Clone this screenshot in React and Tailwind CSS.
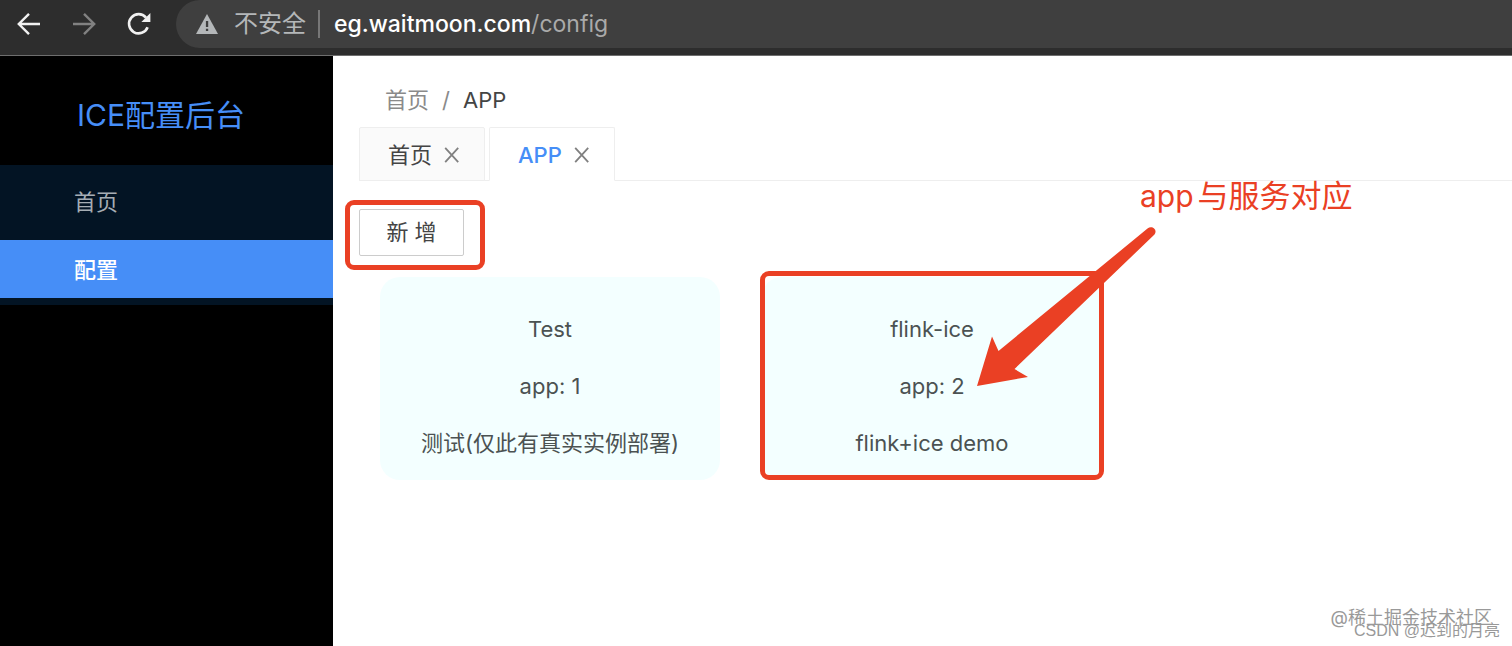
import { useState } from "react";

const apps = [
  { id: 1, name: "Test", info: "测试(仅此有真实实例部署)" },
  { id: 2, name: "flink-ice", info: "flink+ice demo", marked: true },
];

function BrowserBar() {
  return (
    <header className="flex h-14 shrink-0 items-start border-b border-[#6e6e6e] bg-[#2d2d2d]">
      <div className="flex h-12 w-44 shrink-0 items-center gap-[29px] pl-4">
        <button aria-label="Back" className="text-[#f1f1f1]">
          <svg width="26" height="24" viewBox="0 0 26 24" fill="none" stroke="currentColor" strokeWidth="2.4">
            <path d="M24 12H3M13 1.8 2.8 12 13 22.2" />
          </svg>
        </button>
        <button aria-label="Forward" className="text-[#818181]">
          <svg width="26" height="24" viewBox="0 0 26 24" fill="none" stroke="currentColor" strokeWidth="2.4">
            <path d="M2 12h21M13 1.8 23.2 12 13 22.2" />
          </svg>
        </button>
        <button aria-label="Reload" className="text-[#f1f1f1]">
          <svg width="26" height="24" viewBox="0 0 26 24" fill="none" stroke="currentColor" strokeWidth="2.6">
            <path d="M21.6 15.2A9.6 9.6 0 1 1 20 5.6" />
            <path d="M24.4 1v9h-9z" fill="currentColor" stroke="none" />
          </svg>
        </button>
      </div>
      <div className="flex h-12 flex-1 items-center rounded-l-full bg-[#3f3f3f] pl-5 text-[23px]">
        <svg width="22" height="20" viewBox="0 0 22 20" className="shrink-0">
          <path d="M11 0 22 20H0z" fill="#b4b7b9" />
          <path d="M9.9 7h2.3v6H9.9zM9.9 14.8h2.3V17H9.9z" fill="#3f3f3f" />
        </svg>
        <span className="ml-4 text-2xl text-[#b4b7b9]">不安全</span>
        <span className="mx-3 h-7 w-0.5 bg-[#777]" />
        <span className="ml-0.5 text-[#aaa]">
          <span className="font-medium text-white">eg.waitmoon.com</span>/config
        </span>
      </div>
    </header>
  );
}

function Sidebar() {
  return (
    <aside className="w-[333px] shrink-0 bg-black">
      <h1 className="flex h-[109px] items-center pt-2.5 pl-[77px] text-[30px] text-[#468ef7]">ICE配置后台</h1>
      <nav className="flex flex-col gap-2.5 bg-[#031424] py-[7px] text-[22px]">
        <a href="#home" className="flex h-[58px] items-center pt-0.5 pl-[74px] text-[#a6adb4]">首页</a>
        <a href="#config" className="flex h-[58px] items-center bg-[#468ef7] pt-0.5 pl-[74px] font-medium text-white">配置</a>
      </nav>
    </aside>
  );
}

function CloseIcon() {
  return (
    <svg width="16" height="16" viewBox="0 0 16 16" fill="none" stroke="#808080" strokeWidth="1.8">
      <path d="M1.2 .8 14.2 15.200M14.2 .8 1.2 15.200" />
    </svg>
  );
}

function Tab({ label, active, onSelect }) {
  return (
    <div
      className={`flex h-[54px] items-center gap-3 rounded-t-xs border pt-0.5 pr-6 pl-7 ${
        active ? "border-[#eee] border-b-white bg-white" : "border-[#eee] bg-[#fafafa]"
      }`}
    >
      <button
        role="tab"
        aria-selected={active}
        onClick={onSelect}
        className={active ? "font-medium text-[#468ef7]" : "text-[#444]"}
      >
        {label}
      </button>
      <button aria-label={`Close ${label}`}>
        <CloseIcon />
      </button>
    </div>
  );
}

function Note() {
  return (
    <>
      <div className="pointer-events-none absolute -inset-x-0.5 -top-1.5 bottom-0 rounded-[9px] border-5 border-[#ea4024]" />
      <svg
        className="pointer-events-none absolute -top-12 left-[214px] overflow-visible"
        width="182"
        height="162"
        viewBox="0 0 182 162"
      >
        <path
          d="M1 157 16 107.500 22.500 122 171.500 -.5C176-4 182 .8 178.500 5.500L38.500 140 52 148Z"
          fill="#ea4024"
        />
      </svg>
      <p className="absolute -top-[105px] left-[378px] flex items-center gap-1 text-[31px] leading-12 whitespace-nowrap text-[#ea4024]">
        <span className="text-[30px]">app</span>
        <span>与服务对应</span>
      </p>
    </>
  );
}

function AppCard({ app }) {
  return (
    <article className="relative flex w-[340px] flex-col items-center gap-6 rounded-[20px] bg-[#f3ffff] pt-9 pb-5 leading-[33px] text-[#4b5252]">
      <p>{app.name}</p>
      <p>app: {app.id}</p>
      <p>{app.info}</p>
      {app.marked && <Note />}
    </article>
  );
}

export default function App() {
  const [tab, setTab] = useState("APP");

  return (
    <div className="relative flex min-h-screen flex-col overflow-hidden bg-white font-['Inter','Noto_Sans_CJK_SC',sans-serif]">
      <BrowserBar />
      <div className="flex flex-1">
        <Sidebar />
        <main className="min-w-0 flex-1 pl-[26px] text-[22px]">
          <nav className="flex h-[71px] items-center gap-[13px] pt-[18px] pl-[26px] text-[#8a8a8a]">
            <a href="#home">首页</a>
            <span>/</span>
            <span className="text-[#444]">APP</span>
          </nav>
          <div role="tablist" className="flex gap-1 shadow-[inset_0_-1px_0_#eee]">
            {["首页", "APP"].map((label) => (
              <Tab key={label} label={label} active={tab === label} onSelect={() => setTab(label)} />
            ))}
          </div>
          <div className="flex pt-7">
            <div className="relative">
              <button className="block h-[47px] w-[105px] rounded-xs border border-[#ccc] text-[#444]">新 增</button>
              <div className="pointer-events-none absolute -top-[9px] -right-[21px] -bottom-3.5 -left-3.5 rounded-[9px] border-5 border-[#ea4024]" />
            </div>
          </div>
          <section className="flex flex-wrap gap-[42px] pt-[21px] pl-[21px]">
            {apps.map((app) => (
              <AppCard key={app.id} app={app} />
            ))}
          </section>
        </main>
      </div>
      <p className="absolute right-5 bottom-3.5 text-[18px] leading-7 text-[#999]">@稀土掘金技术社区</p>
      <p className="absolute right-3 bottom-[3px] font-['Liberation_Sans','Noto_Sans_CJK_SC',sans-serif] text-base text-[#999]">
        CSDN @迟到的月亮
      </p>
    </div>
  );
}
